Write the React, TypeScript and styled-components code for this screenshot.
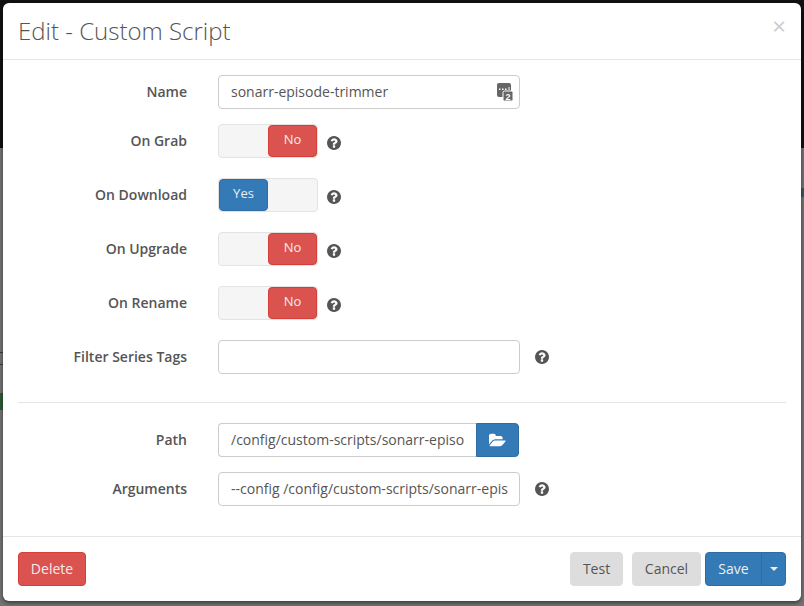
import React from "react";
import styled, { createGlobalStyle } from "styled-components";

const Global = createGlobalStyle`
  html, body { margin: 0; padding: 0; }
  body { font-family: "Open Sans", "Liberation Sans", sans-serif; font-size: 14px; color: #555; }
  * { box-sizing: border-box; }
`;

const Backdrop = styled.div`
  width: 804px;
  height: 606px;
  padding: 3px;
  overflow: hidden;
  background:
    linear-gradient(#2f5a2f, #2f5a2f) 0 393px / 3px 17px no-repeat,
    linear-gradient(#3a3a3a, #3a3a3a) 0 352px / 3px 1px no-repeat,
    linear-gradient(#3a3a3a, #3a3a3a) 0 364px / 3px 1px no-repeat,
    linear-gradient(#3d5566, #3d5566) 801px 188px / 3px 9px no-repeat,
    linear-gradient(to bottom, #111 0, #111 148px, #747474 148px, #747474 100%);
`;

const Modal = styled.div`
  width: 798px;
  height: 598px;
  background: #fff;
  border-radius: 6px;
  box-shadow: 0 2px 4px rgba(0, 0, 0, 0.5);
  display: flex;
  flex-direction: column;
`;

const Header = styled.header`
  height: 57px;
  flex: none;
  padding: 0 15px;
  border-bottom: 1px solid #e5e5e5;
  display: flex;
  align-items: flex-start;
  justify-content: space-between;
`;

const Title = styled.h4`
  margin: 0;
  font-size: 24px;
  font-weight: 300;
  color: #555;
  line-height: 55px;
`;

const Close = styled.span`
  font-size: 24px;
  line-height: 21px;
  font-weight: 400;
  font-family: "Open Sans", "Liberation Sans", sans-serif;
  color: #ccc;
  margin-top: 12px;
`;

const Body = styled.div`
  flex: 1;
  padding: 15px 15px 0;
`;

const Row = styled.div<{ $height: number; $top?: number }>`
  display: grid;
  grid-template-columns: 169px 1fr;
  column-gap: 31px;
  height: ${(p) => p.$height}px;
  padding-top: ${(p) => p.$top ?? 0}px;
`;

const Control = styled.div`
  display: flex;
  align-items: flex-start;
`;

const Label = styled.label`
  text-align: right;
  font-weight: 600;
  font-size: 14px;
  line-height: 20px;
  color: #555;
  padding-top: 7px;
`;

const InputBox = styled.div`
  position: relative;
  flex: none;
  width: 302px;
  height: 34px;
  border: 1px solid #ccc;
  border-radius: 4px;
  padding: 0 12px;
  font-size: 14px;
  line-height: 32px;
  color: #555;
  white-space: nowrap;
  overflow: hidden;
`;

const LastPass = styled.svg`
  position: absolute;
  right: 5px;
  top: 6px;
`;

const Toggle = styled.div`
  flex: none;
  width: 100px;
  height: 34px;
  background: #f5f5f5;
  border: 1px solid #e3e3e3;
  border-radius: 4px;
  display: flex;
`;

const Thumb = styled.div<{ $on: boolean }>`
  width: 49px;
  height: 32px;
  margin-left: ${(p) => (p.$on ? "0" : "49px")};
  background: ${(p) => (p.$on ? "#337ab7" : "#db534f")};
  border: 1px solid ${(p) => (p.$on ? "#2e6da4" : "#d43f3a")};
  border-radius: 4px;
  color: #eee;
  font-size: 13px;
  line-height: 26px;
  text-align: center;
`;

const HelpCell = styled.div`
  display: flex;
  align-items: center;
  height: 34px;
  margin-left: 15px;
`;

const ToggleHelp = styled(HelpCell)`
  height: 38px;
  margin-left: 9px;
`;

const Help = styled.svg`
  display: block;
  width: 14px;
  height: 14px;
  fill: #555;
`;

const Divider = styled.hr`
  margin: 0;
  border: 0;
  border-top: 1px solid #e5e5e5;
`;

const PathGroup = styled.div`
  display: flex;
  width: 301px;
  height: 34px;
`;

const PathInput = styled(InputBox)`
  flex: 1;
  width: auto;
  border-right: 0;
  border-radius: 4px 0 0 4px;
`;

const Browse = styled.div`
  width: 43px;
  height: 34px;
  background: #337ab7;
  border: 1px solid #2e6da4;
  border-radius: 0 4px 4px 0;
  display: flex;
  align-items: center;
  justify-content: center;
`;

const Footer = styled.footer`
  flex: none;
  height: 65px;
  padding: 15px;
  border-top: 1px solid #e5e5e5;
  display: flex;
  align-items: flex-start;
`;

const Btn = styled.button<{ $bg: string; $border: string; $color: string }>`
  height: 34px;
  padding: 0 12px;
  font: 400 14px/32px "Open Sans", "Liberation Sans", sans-serif;
  background: ${(p) => p.$bg};
  border: 1px solid ${(p) => p.$border};
  color: ${(p) => p.$color};
  border-radius: 4px;
  display: flex;
  align-items: center;
  justify-content: center;
`;

const Spacer = styled.div`
  flex: 1;
`;

const Caret = styled.span`
  width: 0;
  height: 0;
  border-top: 4px solid #eee;
  border-left: 4px solid transparent;
  border-right: 4px solid transparent;
`;

const SaveGroup = styled.div`
  display: flex;
  margin-left: 4px;
`;

const SaveBtn = styled(Btn)`
  width: 57px;
  border-radius: 4px 0 0 4px;
`;

const SaveCaret = styled(Btn)`
  width: 25px;
  padding: 0;
  margin-left: -1px;
  border-radius: 0 4px 4px 0;
`;

const TestBtn = styled(Btn)`
  width: 53px;
  margin-right: 9px;
`;

const CancelBtn = styled(Btn)`
  width: 69px;
`;

const DeleteBtn = styled(Btn)`
  width: 68px;
`;

const QUESTION =
  "M1024 1376v-192q0-14-9-23t-23-9h-192q-14 0-23 9t-9 23v192q0 14 9 23t23 9h192q14 0 23-9t9-23zm256-672q0-88-55.500-163t-138.500-116-170-41q-243 0-371 213-15 24 8 42l132 100q7 6 19 6 16 0 25-12 53-68 86-92 34-24 86-24 48 0 85.500 26t37.500 59q0 38-20 61t-68 45q-63 28-115.500 86.500t-52.500 125.500v36q0 14 9 23t23 9h192q14 0 23-9t9-23q0-19 21.500-49.500t54.500-49.500q32-18 49-28.500t46-35 44.500-48 28-60.500 12.500-81zm384 192q0 209-103 385.500t-279.500 279.500-385.500 103-385.500-103-279.500-279.500-103-385.500 103-385.500 279.500-279.500 385.500-103 385.500 103 279.500 279.500 103 385.500z";

const HelpIcon = () => (
  <Help viewBox="128 128 1536 1536">
    <path d={QUESTION} />
  </Help>
);

const toggles = [
  { label: "On Grab", on: false },
  { label: "On Download", on: true },
  { label: "On Upgrade", on: false },
  { label: "On Rename", on: false },
];

export default function App() {
  return (
    <>
      <Global />
      <Backdrop>
        <Modal>
          <Header>
            <Title>Edit - Custom Script</Title>
            <Close>×</Close>
          </Header>
          <Body>
            <Row $height={49}>
              <Label>Name</Label>
              <Control>
                <InputBox>
                  sonarr-episode-trimmer
                  <LastPass width="18" height="20" viewBox="0 0 18 20">
                    <rect x="1" y="1" width="14" height="14" rx="2" fill="#666" />
                    <path d="M3 6.500h1.500v1.500H3zM6 6.500h1.500v1.500H6zM9 6.500h1.500v1.500H9zM12.500 5h1v3h-1z" fill="#fff" />
                    <rect x="7" y="9" width="10" height="10" rx="1.500" fill="#666" stroke="#fff" strokeWidth="1" />
                    <text x="12" y="17.500" fontSize="9" fontWeight="700" textAnchor="middle" fill="#fff" fontFamily="Liberation Sans">2</text>
                  </LastPass>
                </InputBox>
              </Control>
            </Row>
            {toggles.map((t) => (
              <Row $height={54} key={t.label}>
                <Label>{t.label}</Label>
                <Control>
                  <Toggle>
                    <Thumb $on={t.on}>{t.on ? "Yes" : "No"}</Thumb>
                  </Toggle>
                  <ToggleHelp>
                    <HelpIcon />
                  </ToggleHelp>
                </Control>
              </Row>
            ))}
            <Row $height={62}>
              <Label>Filter Series Tags</Label>
              <Control>
                <InputBox />
                <HelpCell>
                  <HelpIcon />
                </HelpCell>
              </Control>
            </Row>
            <Divider />
            <Row $height={69} $top={20}>
              <Label>Path</Label>
              <Control>
                <PathGroup>
                  <PathInput>/config/custom-scripts/sonarr-episo</PathInput>
                  <Browse>
                    <svg width="17" height="15" viewBox="0 0 1920 1536">
                      <path
                        fill="#fff"
                        d="M1879 824q0 31-31 66l-336 396q-43 51-120.500 86.500t-143.500 35.500h-1088q-34 0-60.500-13t-26.500-43q0-31 31-66l336-396q43-51 120.500-86.500t143.500-35.500h1088q34 0 60.500 13t26.500 43zm-343-344v160h-832q-94 0-197 47.500t-164 119.500l-337 396-5 6q0-4-.500-12.500t-.500-12.500v-960q0-92 66-158t158-66h320q92 0 158 66t66 158v32h544q92 0 158 66t66 158z"
                      />
                    </svg>
                  </Browse>
                </PathGroup>
              </Control>
            </Row>
            <Row $height={48}>
              <Label>Arguments</Label>
              <Control>
                <InputBox>--config /config/custom-scripts/sonarr-epis</InputBox>
                <HelpCell>
                  <HelpIcon />
                </HelpCell>
              </Control>
            </Row>
          </Body>
          <Footer>
            <DeleteBtn $bg="#db534f" $border="#d43f3a" $color="#eee">Delete</DeleteBtn>
            <Spacer />
            <TestBtn $bg="#ddd" $border="#ddd" $color="#555">Test</TestBtn>
            <CancelBtn $bg="#ddd" $border="#ddd" $color="#555">Cancel</CancelBtn>
            <SaveGroup>
              <SaveBtn $bg="#337ab7" $border="#2e6da4" $color="#eee">Save</SaveBtn>
              <SaveCaret $bg="#337ab7" $border="#2e6da4" $color="#eee">
                <Caret />
              </SaveCaret>
            </SaveGroup>
          </Footer>
        </Modal>
      </Backdrop>
    </>
  );
}
